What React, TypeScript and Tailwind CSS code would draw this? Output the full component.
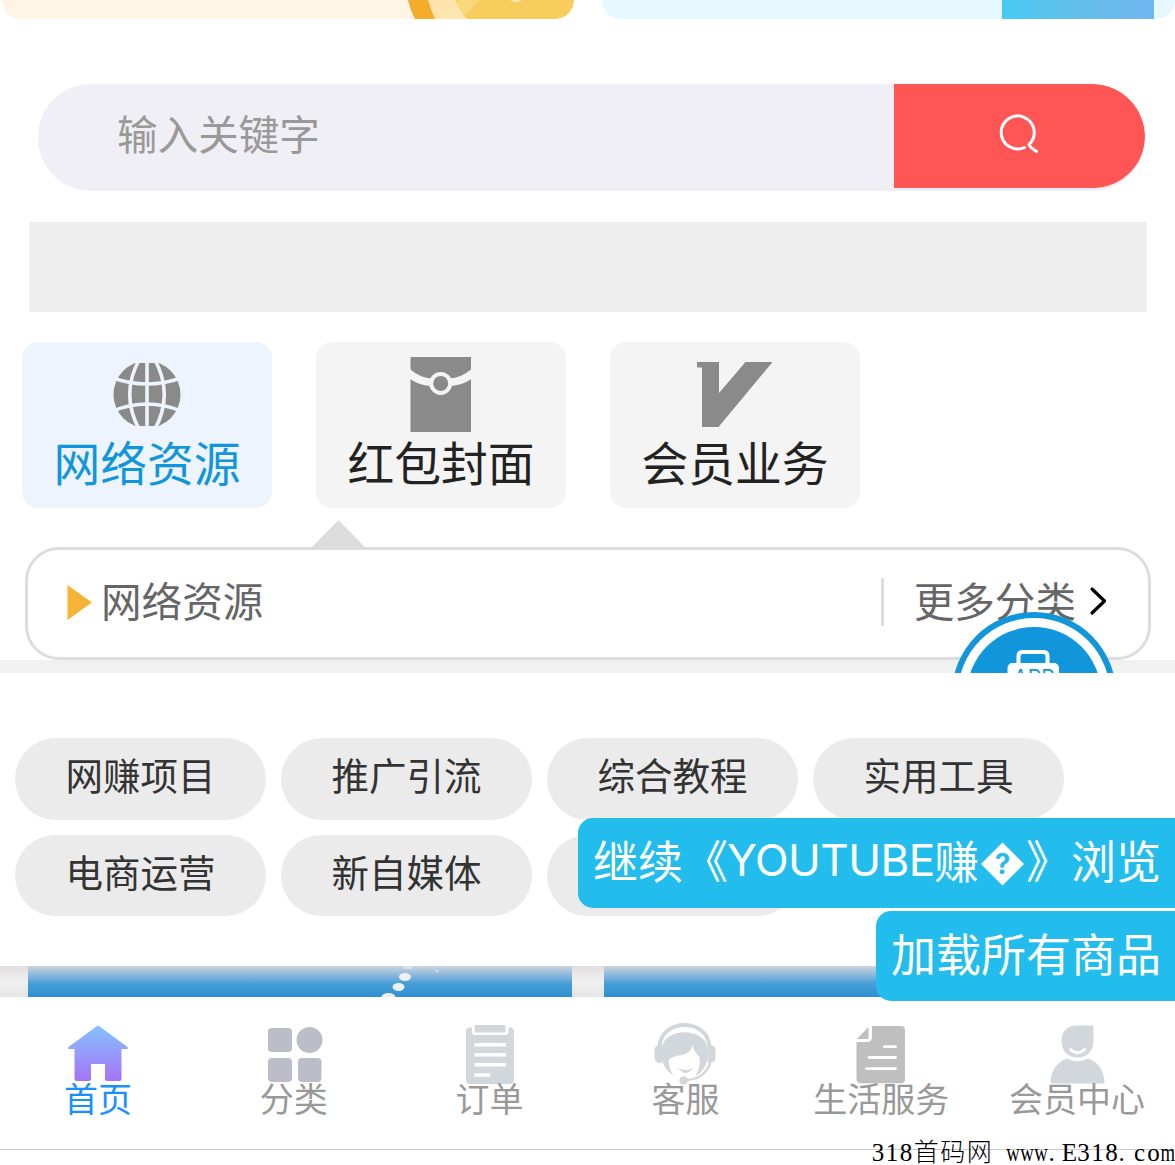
import React from "react";

const categories = [
  { label: "网络资源", icon: "globe", active: true },
  { label: "红包封面", icon: "packet", active: false },
  { label: "会员业务", icon: "vip", active: false },
];

const tags = ["网赚项目", "推广引流", "综合教程", "实用工具", "电商运营", "新自媒体", ""];

const tabs = [
  { label: "首页", icon: "home" },
  { label: "分类", icon: "grid" },
  { label: "订单", icon: "order" },
  { label: "客服", icon: "service" },
  { label: "生活服务", icon: "life" },
  { label: "会员中心", icon: "user" },
];

function CategoryIcon({ name }: { name: string }) {
  if (name === "globe") {
    return (
      <svg width="90" height="90" viewBox="0 0 90 90" fill="none" stroke="#edf4fd" strokeWidth="3.6">
        <defs>
          <clipPath id="globe-clip">
            <rect x="0" y="13" width="90" height="63" />
          </clipPath>
        </defs>
        <circle cx="42" cy="44.500" r="33.500" fill="#8a8a8a" stroke="none" clipPath="url(#globe-clip)" />
        <path d="M42 8v72M34.500 9Q15 44.500 34.500 80M49.500 9Q69 44.500 49.500 80M8 28Q42 40 76 28M8 61Q42 47 76 61" />
      </svg>
    );
  }
  if (name === "packet") {
    return (
      <svg width="90" height="90" viewBox="0 0 90 90">
        <rect x="11.500" y="7" width="60.500" height="75" fill="#8a8a8a" />
        <path fill="#f4f4f4" d="M11 19Q21 28 33 28.500H50Q62 28 72.500 19V29Q62 36 50 36H33Q21 36 11 29z" />
        <circle cx="41.700" cy="33.400" r="9.500" fill="#8a8a8a" stroke="#f4f4f4" strokeWidth="4" />
      </svg>
    );
  }
  return (
    <svg width="90" height="90" viewBox="0 0 90 90">
      <path fill="#8a8a8a" d="M4 12H26V43L52.500 12H79.500L25.500 77H9V17.500H4z" />
    </svg>
  );
}

function TabIcon({ name }: { name: string }) {
  switch (name) {
    case "home":
      return (
        <svg width="80" height="75" viewBox="0 0 80 75">
          <defs>
            <linearGradient id="home-fill" x1="0" y1="0" x2="0" y2="1">
              <stop offset="0" stopColor="#84c2ff" />
              <stop offset="1" stopColor="#a574f6" />
            </linearGradient>
          </defs>
          <path fill="url(#home-fill)" d="M39 11Q40 10 41 11L69.500 32Q71 34 68 34H63.500V64Q63.500 66 61.500 66H49Q47 66 47 64V49H33V64Q33 66 31 66H18.500Q16.500 66 16.500 64V34H12Q9 34 10.500 32z" />
        </svg>
      );
    case "grid":
      return (
        <svg width="80" height="75" viewBox="0 0 80 75" fill="#bdbdc7">
          <rect x="14" y="13" width="24" height="24" rx="4" />
          <circle cx="55.500" cy="25" r="13" />
          <rect x="14" y="43" width="24" height="24" rx="4" />
          <rect x="44" y="43" width="23.500" height="24" rx="4" />
        </svg>
      );
    case "order":
      return (
        <svg width="80" height="75" viewBox="0 0 80 75">
          <rect x="16" y="12.500" width="48" height="56.500" rx="4" fill="#d2d7db" />
          <path fill="#fff" d="M22 7H58.500V17Q58.500 20 55.500 20H25Q22 20 22 17z" />
          <rect x="24.500" y="10" width="31" height="7.500" rx="1" fill="#d2d7db" />
          <path stroke="#fff" strokeWidth="3.600" d="M24.500 29.700H56M24.500 39.700H56M24.500 49.700H56M24.500 60H40" />
        </svg>
      );
    case "service":
      return (
        <svg width="80" height="75" viewBox="0 0 80 75">
          <path fill="none" stroke="#d2d7db" strokeWidth="4" d="M14.500 31C17 3 62 3 64.500 31" />
          <path fill="#d2d7db" d="M17 33C19 12 60 12 62.500 33V44Q60 56 50.500 61Q56 52 54.500 42Q49 37 47.500 30Q46 38 37 40Q27 41 23.500 45Q24 55 29 61Q19 55 17 44z" />
          <path fill="#d2d7db" d="M17 30H14Q9.500 31 9.500 35V43Q9.500 48 17 48zM62.500 30H66Q70.500 31 70.500 35V43Q70.500 48 62.500 48z" />
          <path fill="#d2d7db" d="M33 53Q40.500 57 48 53Q40.500 63 33 53" />
          <path fill="none" stroke="#d2d7db" strokeWidth="2.500" d="M65.500 47Q60 65 38.500 65.300" />
          <circle cx="38.700" cy="65.500" r="4.300" fill="#d2d7db" />
        </svg>
      );
    case "life":
      return (
        <svg width="80" height="75" viewBox="0 0 80 75">
          <path fill="#bfbfbf" d="M31 11H60Q64 11 64 15V64Q64 68.300 60 68.300H20Q15.500 68.300 15.500 64V27H26Q31 27 31 22zM16 24L27.500 12V24z" />
          <path stroke="#fff" strokeWidth="2.800" strokeLinecap="round" d="M43.500 31.700H54.500M28 42.500H54.500M25.500 53.700H54.500" />
        </svg>
      );
    default:
      return (
        <svg width="80" height="75" viewBox="0 0 80 75" fill="#d2d7db">
          <path d="M40 10.500H56.500V26C56.500 48 24.500 48 24.500 26Q24.500 11 40 10.500z" />
          <path fill="none" stroke="#fff" strokeWidth="3" strokeLinecap="round" d="M33.500 34.500Q40.500 41 47.500 34.500" />
          <path d="M30 43.500Q40.500 49 51 43.500Q66 49 67.500 66Q67.500 68.500 65.500 68.500H15.500Q13.500 68.500 13.500 66Q15 49 30 43.500z" />
        </svg>
      );
  }
}

export default function App() {
  return (
    <div className="relative flex h-[1165px] w-[1175px] flex-col overflow-hidden bg-white font-['Noto_Sans_CJK_SC',sans-serif] whitespace-nowrap">
      <header className="flex h-[19px] shrink-0 gap-[28px] pl-[2px]">
        <div className="h-[19px] w-[572px] shrink-0 overflow-hidden rounded-b-[20px] bg-[#fff5e7]">
          <svg width="572" height="19" viewBox="0 0 572 19">
            <path fill="#f3ac2c" d="M406 0H428Q431 10 436 19H413Q408 10 406 0z" />
            <path fill="#ffe3ac" d="M426 0H453Q457 11 465 19H433Q429 10 426 0z" />
            <path fill="#f7ce5d" d="M453 0H572V19H465Q457 11 453 0z" />
            <path fill="#ffeac0" opacity="0.300" d="M457 0H477L459 19H437z" />
            <ellipse cx="514" cy="-1" rx="6" ry="3" fill="#ffeac0" />
          </svg>
        </div>
        <div className="flex h-[19px] w-[573px] shrink-0 justify-end overflow-hidden rounded-b-[20px] bg-[#e7f7ff] pr-[21px]">
          <div className="w-[152px] bg-linear-to-r from-[#44cbf5] via-[#65bfea] to-[#70b6f2]" />
        </div>
      </header>

      <div className="mt-[65px] ml-[38px] flex h-[107px] w-[1107px] shrink-0 overflow-hidden rounded-[53px] bg-[#f0eff5]">
        <div className="flex-1 pt-[20px] pl-[79px] text-[40.600px] leading-[58px] text-[#999]">输入关键字</div>
        <button className="flex h-[104px] w-[251px] items-center justify-center rounded-r-[52px] bg-[#ff5555] pr-[2px]">
          <svg width="44" height="44" viewBox="0 0 44 44" fill="none" stroke="#fff" strokeWidth="3" strokeLinecap="round" className="-mt-1">
            <path d="M27.500 35.500A16.500 16.500 0 1 1 32 32.500Q32.500 35 39.500 39.500" />
          </svg>
        </button>
      </div>

      <div className="mt-[31px] ml-[29px] h-[90px] w-[1118px] shrink-0 bg-[#eeeeee]" />

      <div className="mt-[30px] ml-[22px] flex shrink-0 gap-[44px]">
        {categories.map((c) => (
          <div
            key={c.label}
            className={
              "flex h-[166px] w-[250px] flex-col rounded-[16px] " +
              (c.active ? "bg-[#edf4fd] text-[#1296db]" : "bg-[#f4f4f4] text-[#222]")
            }
          >
            <div className="mt-[8px] ml-[83px] h-[90px]">
              <CategoryIcon name={c.icon} />
            </div>
            <div className="-mt-[9px] text-center text-[46.800px] leading-[60px]">{c.label}</div>
          </div>
        ))}
      </div>

      <svg width="55" height="28" viewBox="0 0 55 28" className="mt-[12px] -mb-[1px] ml-[311px] shrink-0">
        <path d="M0 28L27.500 0L55 28z" fill="#ddd" />
      </svg>
      <div className="ml-[25px] flex h-[113px] w-[1126px] shrink-0 items-center rounded-[34px] border-3 border-[#ddd] pb-[3px] text-[40.600px] leading-[58px] text-[#666]">
        <svg width="25" height="35" viewBox="0 0 25 35" className="ml-[39px] shrink-0">
          <path d="M0.500 0L25 17.500L0.500 35z" fill="#f6b436" />
        </svg>
        <span className="-mt-[5px] ml-[9px]">网络资源</span>
        <span className="ml-auto h-[48px] w-[3px] bg-[#ddd]" />
        <span className="-mt-[5px] ml-[30px]">更多分类</span>
        <svg width="18" height="30" viewBox="0 0 18 30" fill="none" stroke="#000" strokeWidth="3.200" strokeLinecap="round" strokeLinejoin="round" className="-mt-[2px] mr-[41px] ml-[13px]">
          <path d="M3 3L15.500 15L3 27" />
        </svg>
      </div>
      <div className="h-[13px] shrink-0 bg-[#f1f1f2]" />

      <div className="mt-[65px] ml-[15px] grid shrink-0 grid-cols-[repeat(4,251px)] gap-x-[15px] gap-y-[15px]">
        {tags.map((t, i) => (
          <div key={i} className="h-[81.500px] rounded-full bg-[#ebebeb] pt-[7px] text-center text-[37.500px] leading-[58px] text-[#333]">
            {t}
          </div>
        ))}
      </div>

      <div className="mt-[50px] flex h-[31px] shrink-0 gap-[32px] bg-linear-to-b from-[#e2dfe0] via-[#f0f0f0] to-[#e6e6e6] pl-[28px]">
        <div className="w-[544px] bg-linear-to-b from-[#cbd3df] via-[#489fd6] via-55% to-[#2e8fd1]">
          <svg width="544" height="31" viewBox="0 0 544 31" fill="#edf2f6">
            <ellipse cx="380" cy="1" rx="5" ry="2" fill="#dce1e7" />
            <ellipse cx="377" cy="11" rx="6" ry="4" />
            <ellipse cx="370.500" cy="21" rx="6" ry="4" />
            <ellipse cx="360.500" cy="31" rx="7" ry="4" />
            <circle cx="409" cy="5" r="1.500" opacity="0.600" />
          </svg>
        </div>
        <div className="flex-1 bg-linear-to-b from-[#cbd3df] via-[#489fd6] via-55% to-[#2e8fd1]" />
      </div>

      <nav className="grid h-[153px] shrink-0 grid-cols-6 border-b border-[#ccc] bg-white">
        {tabs.map((t, i) => (
          <div key={t.label} className={"flex flex-col items-center pt-[18px] text-[34px] leading-[48px] " + (i === 0 ? "text-[#1890ff]" : "text-[#999]")}>
            <TabIcon name={t.icon} />
            <span className="-mt-[16px]">{t.label}</span>
          </div>
        ))}
      </nav>

      <div className="absolute top-[612px] left-[952px] h-[61px] w-[164px] overflow-hidden">
        <svg width="164" height="164" viewBox="0 0 164 164">
          <circle cx="82" cy="82" r="82" fill="#1296db" />
          <circle cx="82" cy="82" r="76" fill="#fff" />
          <circle cx="82" cy="82" r="67" fill="#1296db" />
          <path d="M66.500 53V44Q66.500 40 70.500 40H91.500Q95.500 40 95.500 44V53" fill="none" stroke="#fff" strokeWidth="4" />
          <rect x="55.500" y="51" width="51.500" height="30" rx="5" fill="#fff" />
          <text x="82" y="73" textAnchor="middle" fontFamily="Inter, sans-serif" fontSize="21" fill="#1296db">APP</text>
        </svg>
      </div>

      <div className="absolute top-[818px] right-0 flex h-[90px] w-[597px] rounded-l-[15px] bg-[#23bded] pl-[15px] text-[45px] leading-[83px] text-white">
        <span>继续《</span>
        <span className="ml-[-1px] w-[207px] pt-px font-['Inter',sans-serif] text-[44px] tracking-[-0.500px]">YOUTUBE</span>
        <span>赚</span>
        <svg width="47" height="46" viewBox="0 0 47 46" className="mt-[24px] shrink-0">
          <path d="M23.500 0.500L45 22L23.500 43.500L2 22z" fill="#fff" />
          <text x="23.500" y="32" textAnchor="middle" fontFamily="Inter, sans-serif" fontSize="28" fontWeight="700" fill="#23bded">?</text>
        </svg>
        <span>》浏览</span>
      </div>
      <div className="absolute top-[911px] right-0 h-[90px] w-[299px] rounded-l-[15px] bg-[#23bded] pl-[15px] text-[45px] leading-[83px] text-white">
        加载所有商品
      </div>

      <div className="absolute top-[1137px] left-[871px] flex h-[32px] font-['Liberation_Serif','Noto_Sans_CJK_SC',serif] text-[25px] leading-[32px] text-black">
        {Array.from("318首码网 www.E318.com").map((ch, i) => (
          <span key={i} className={"flex " + (ch === "." ? "justify-start " : "justify-center ") + (i > 2 && i < 6 ? "w-[26.500px] font-light" : "w-[14px]")}>
            <span className={ch === "w" || ch === "m" ? "scale-x-75" : ""}>{ch}</span>
          </span>
        ))}
      </div>
    </div>
  );
}
